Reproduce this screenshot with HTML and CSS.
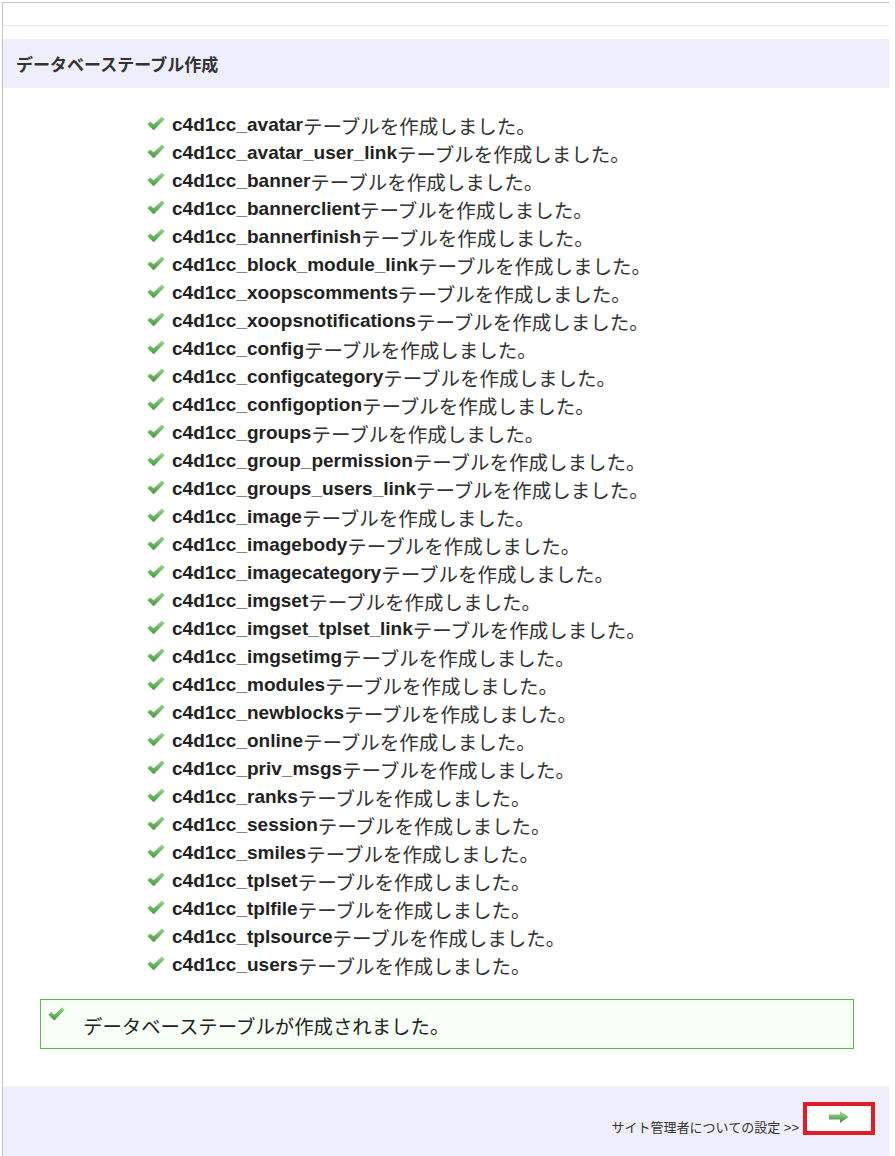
FILE: index.html
```html
<!DOCTYPE html>
<html lang="ja">
<head>
  <meta charset="UTF-8" />
  <title>データベーステーブル作成</title>
  <link rel="stylesheet" href="styles.css">
</head>
<body>
  <svg width="0" height="0" class="defs">
    <defs>
      <linearGradient id="chk" x1="0" y1="0" x2="0" y2="1">
        <stop offset="0" stop-color="#9bd68f"/>
        <stop offset="1" stop-color="#3f9a3a"/>
      </linearGradient>
      <linearGradient id="arw" x1="0" y1="0" x2="0" y2="1">
        <stop offset="0" stop-color="#a8d8a0"/>
        <stop offset="1" stop-color="#3f8f3a"/>
      </linearGradient>
      <symbol id="check" viewBox="0 0 17 14">
        <path d="M0.3 7.8 L3 5 L6.3 7.8 L14 0.3 L16.7 3 L6.3 13.4 Z" fill="url(#chk)"/>
      </symbol>
    </defs>
  </svg>

  <div class="page">
    <div class="topbar"></div>

    <h2 class="title">データベーステーブル作成</h2>

    <ul class="tables" id="tables"></ul>

    <div class="done">
      <svg class="done-icon"><use href="#check"/></svg>
      <span>データベーステーブルが作成されました。</span>
    </div>

    <div class="footer">
      <span class="next-label">サイト管理者についての設定 &gt;&gt;</span>
      <button class="next-btn" type="button">
        <svg width="20" height="12" viewBox="0 0 20 12">
          <path d="M0 3.5 H11 V0 L19.5 6 L11 12 V8.5 H0 Z" fill="url(#arw)"/>
        </svg>
      </button>
    </div>
  </div>

  <script>
    const tables = [
      "avatar", "avatar_user_link", "banner", "bannerclient", "bannerfinish",
      "block_module_link", "xoopscomments", "xoopsnotifications", "config",
      "configcategory", "configoption", "groups", "group_permission",
      "groups_users_link", "image", "imagebody", "imagecategory", "imgset",
      "imgset_tplset_link", "imgsetimg", "modules", "newblocks", "online",
      "priv_msgs", "ranks", "session", "smiles", "tplset", "tplfile",
      "tplsource", "users"
    ];
    const list = document.getElementById("tables");
    tables.forEach(name => {
      const li = document.createElement("li");
      li.innerHTML = '<svg class="icon"><use href="#check"/></svg>' +
        '<b>c4d1cc_' + name + '</b><span class="ja">テーブルを作成しました。</span>';
      list.appendChild(li);
    });
  </script>
</body>
</html>
```

FILE: styles.css
```css
body {
  margin: 0;
  background: #fff;
  color: #333;
  font-family: "Liberation Sans", Arial, "Noto Sans CJK JP", sans-serif;
}
.defs {
  position: absolute;
}
.page {
  margin: 2px 0 0 2px;
  width: 886px;
  border-top: 1px solid #c4c4c4;
  border-left: 1px solid #c4c4c4;
  min-height: 1154px;
  display: flex;
  flex-direction: column;
}
.topbar {
  height: 22px;
  border-bottom: 1px solid #e4e4e4;
}
.title {
  margin: 13px 0 0;
  height: 49px;
  display: flex;
  align-items: center;
  padding-left: 13px;
  background: #eeeefc;
  font-size: 17px;
  font-weight: bold;
  color: #333;
}
.tables {
  list-style: none;
  margin: 23px 0 0;
  padding: 0 0 0 144px;
}
.tables li {
  height: 28px;
  display: flex;
  align-items: center;
  font-size: 19px;
  white-space: nowrap;
}
.tables b {
  color: #222;
}
.tables .ja {
  font-size: 19.5px;
}
.icon {
  width: 18px;
  height: 15px;
  margin: -4px 7px 0 0;
  flex: none;
}
.done {
  margin: 20px 0 0 37px;
  width: 812px;
  height: 48px;
  border: 1px solid #5cb84e;
  background: #f7fff7;
  display: flex;
  align-items: center;
  font-size: 19.4px;
  color: #222;
  position: relative;
}
.done span {
  margin-left: 42px;
  padding-top: 2px;
}
.done-icon {
  position: absolute;
  left: 7px;
  top: 7px;
  width: 17px;
  height: 14px;
}
.footer {
  margin-top: 37px;
  flex: 1;
  border-top: 1px solid #f4f4f4;
  background: #eeeefc;
  display: flex;
  justify-content: flex-end;
  align-items: flex-start;
  padding: 15px 14px 0 0;
}
.next-label {
  font-size: 13px;
  color: #333;
  margin-top: 15px;
  margin-right: 4px;
}
.next-btn {
  width: 72px;
  height: 33px;
  border: 4px solid #e21c24;
  background: #fff;
  padding: 0;
  display: flex;
  align-items: center;
  justify-content: center;
}
.next-btn svg {
  margin-top: -3px;
}
```
